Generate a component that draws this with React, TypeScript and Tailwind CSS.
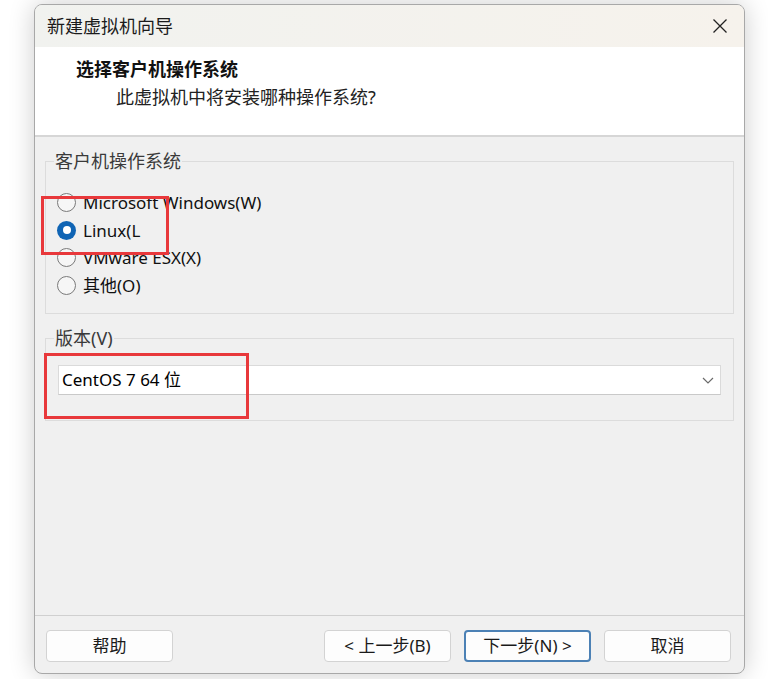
import type { ReactNode } from "react";

const cjk = "font-['Segoe_UI','Noto_Sans','Noto_Sans_CJK_SC',sans-serif]";

function Radio({ checked, label }: { checked?: boolean; label: string }) {
  return (
    <div className="flex h-[27.5px] items-center gap-[7px]">
      {checked ? (
        <span className="flex h-[19px] w-[19px] items-center justify-center rounded-full bg-[#0f64b4]">
          <span className="h-[8px] w-[8px] rounded-full bg-white" />
        </span>
      ) : (
        <span className="h-[19px] w-[19px] rounded-full border border-[#7a7a7a] bg-[#f6f6f6]" />
      )}
      <span className="text-[17px] leading-none text-[#111]">{label}</span>
    </div>
  );
}

function GroupBox({ title, className, children }: { title: string; className: string; children: ReactNode }) {
  return (
    <div className={`relative border border-[#dcdcdc] ${className}`}>
      <span className="absolute left-[8px] top-[-13px] bg-[#f0f0f0] px-[1px] text-[18px] leading-[24px] text-[#3a3a3a]">{title}</span>
      {children}
    </div>
  );
}

function Button({ children, primary }: { children: ReactNode; primary?: boolean }) {
  return (
    <button
      className={`flex h-[32px] w-[127px] items-center justify-center rounded-[4px] bg-[#fdfdfd] text-[17px] text-[#1a1a1a] ${
        primary ? "border-2 border-[#4c81b5]" : "border border-[#d3d3d3]"
      }`}
    >
      {children}
    </button>
  );
}

export default function App() {
  return (
    <div className={`h-[679px] w-[768px] overflow-hidden bg-white pl-[34px] pt-[4px] ${cjk}`}>
      <div className="flex h-[670px] w-[711px] flex-col overflow-hidden rounded-[8px] border border-[#a8a8a8] bg-[#f0f0f0] shadow-[0_0_26px_rgba(0,0,0,0.2)]">
        {/* title bar */}
        <div className="flex h-[42px] shrink-0 items-center justify-between bg-gradient-to-r from-[#f1f2ef] to-[#f6f2ec] pl-[12px] pr-[16px]">
          <span className="text-[18px] text-[#1b1b1b]">新建虚拟机向导</span>
          <svg width="16" height="16" viewBox="0 0 16 16" className="text-[#222]">
            <path d="M1.5 1.5 14.5 14.5M14.5 1.5 1.5 14.5" stroke="currentColor" strokeWidth="1.3" fill="none" />
          </svg>
        </div>

        {/* page header */}
        <div className="h-[90px] shrink-0 border-b-2 border-[#d6d6d6] bg-white pt-[9px]">
          <div className="pl-[41px] text-[18px] font-bold leading-[26px] text-[#111]">选择客户机操作系统</div>
          <div className="pl-[81px] pt-[2px] text-[18px] leading-[26px] text-[#222]">此虚拟机中将安装哪种操作系统?</div>
        </div>

        {/* body */}
        <div className="relative flex-1 px-[10px] pt-[24px]">
          <GroupBox title="客户机操作系统" className="h-[153px] pl-[11px] pt-[27px]">
            <Radio label="Microsoft Windows(W)" />
            <Radio checked label="Linux(L" />
            <Radio label="VMware ESX(X)" />
            <Radio label="其他(O)" />
          </GroupBox>

          <GroupBox title="版本(V)" className="mt-[24px] h-[83px] px-[12px] pt-[26px]">
            <div className="flex h-[30px] items-center justify-between border border-[#dadada] border-b-[#c9c9c9] bg-white pl-[3px] pr-[6px]">
              <span className="text-[17px] text-black">CentOS 7 64 位</span>
              <svg width="12" height="7" viewBox="0 0 12 7">
                <path d="M1 1 6 6 11 1" stroke="#6a6a6a" strokeWidth="1.2" fill="none" />
              </svg>
            </div>
          </GroupBox>

          {/* red highlight frames */}
          <div className="pointer-events-none absolute left-[6px] top-[59px] h-[59px] w-[128px] border-[3px] border-[#e8383b]" />
          <div className="pointer-events-none absolute left-[9px] top-[216px] h-[66px] w-[205px] border-[3px] border-[#e8383b]" />
        </div>

        {/* footer */}
        <div className="flex h-[58px] shrink-0 items-start border-t border-[#d0d0d0] pl-[11px] pr-[13px] pt-[14px]">
          <Button>帮助</Button>
          <div className="flex-1" />
          <div className="flex gap-[13px]">
            <Button>&lt; 上一步(B)</Button>
            <Button primary>下一步(N) &gt;</Button>
            <Button>取消</Button>
          </div>
        </div>
      </div>
    </div>
  );
}
